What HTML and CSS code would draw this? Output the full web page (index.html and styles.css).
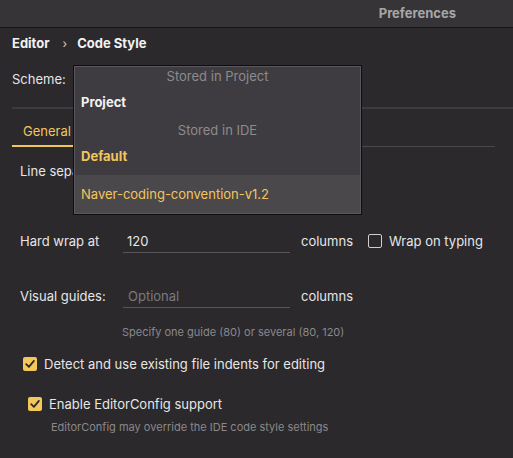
FILE: index.html
```html
<!DOCTYPE html>
<html>
<head>
<meta charset="utf-8">
<link rel="stylesheet" href="styles.css">
</head>
<body>
<div class="window">
  <div class="titlebar"><span class="title">Preferences</span></div>
  <div class="content">
    <div class="crumbs"><span>Editor</span><span class="sep">›</span><span>Code Style</span></div>
    <div class="scheme-row"><span class="label">Scheme:</span></div>
    <div class="divider"></div>
    <div class="tabs"><span class="tab active">General</span></div>
    <div class="line-sep">Line separator:</div>
    <div class="form-row wrap-row">
      <span class="flabel">Hard wrap at</span>
      <span class="field"><span class="value">120</span></span>
      <span class="unit">columns</span>
      <span class="check off"></span>
      <span class="clabel">Wrap on typing</span>
    </div>
    <div class="form-row guides-row">
      <span class="flabel">Visual guides:</span>
      <span class="field"><span class="placeholder">Optional</span></span>
      <span class="unit">columns</span>
    </div>
    <div class="hint guide-hint">Specify one guide (80) or several (80, 120)</div>
    <div class="cb-row detect">
      <span class="check on"><svg viewBox="0 0 14 14" width="14" height="14"><path d="M3.2 7.2 L5.9 9.9 L10.9 3.9" fill="none" stroke="#2b292c" stroke-width="1.8" stroke-linecap="round" stroke-linejoin="round"/></svg></span>
      <span class="clabel">Detect and use existing file indents for editing</span>
    </div>
    <div class="cb-row editorconfig">
      <span class="check on"><svg viewBox="0 0 14 14" width="14" height="14"><path d="M3.2 7.2 L5.9 9.9 L10.9 3.9" fill="none" stroke="#2b292c" stroke-width="1.8" stroke-linecap="round" stroke-linejoin="round"/></svg></span>
      <span class="clabel">Enable EditorConfig support</span>
    </div>
    <div class="hint ec-hint">EditorConfig may override the IDE code style settings</div>
  </div>
  <div class="popup">
    <div class="group g1">Stored in Project</div>
    <div class="item bold project">Project</div>
    <div class="group g2">Stored in IDE</div>
    <div class="item bold yellow default">Default</div>
    <div class="item selected yellow">Naver-coding-convention-v1.2</div>
  </div>
</div>
</body>
</html>
```
FILE: styles.css
```css
* { box-sizing: border-box; }
html, body { margin: 0; padding: 0; }
body {
  background: #2b292c;
  font-family: Inter, "Noto Sans", "Liberation Sans", sans-serif;
  font-size: 13px;
  color: #dcdcdc;
  width: 513px;
  height: 458px;
  overflow: hidden;
}
.window { position: relative; width: 513px; height: 458px; }
.titlebar {
  height: 28px;
  background: #363437;
  border-bottom: 1px solid #161517;
  display: flex;
  align-items: center;
  justify-content: flex-end;
  padding-right: 57px;
  padding-bottom: 2px;
}
.title { color: #a7a6a8; font-weight: 700; font-size: 13px; }
.content { padding-left: 12px; }
.crumbs {
  margin-top: 7px;
  height: 16px;
  display: flex;
  align-items: center;
  color: #f2f2f2;
  font-weight: 700;
  font-size: 13px;
}
.crumbs .sep { font-weight: 400; color: #cfcfcf; font-size: 12px; margin: 0 10px 0 13px; }
.scheme-row { margin-top: 20px; height: 16px; display: flex; align-items: center; }
.label { color: #e6e6e6; }
.divider { margin-top: 20px; height: 2px; background: #3d3b3e; }
.tabs { height: 38px; display: flex; align-items: stretch; width: 483px; border-bottom: 1px solid #4a484b; }
.tab { padding: 0 11px 6px; display: flex; align-items: flex-end; }
.tab.active { color: #f2c55c; border-bottom: 2px solid #f2c55c; margin-bottom: -1px; }
.line-sep { margin-top: 16px; padding-left: 8px; height: 16px; color: #e6e6e6; }
.form-row { display: flex; align-items: center; padding-left: 8px; height: 24px; }
.wrap-row { margin-top: 50px; }
.guides-row { margin-top: 31px; }
.flabel { width: 103px; color: #e6e6e6; }
.field {
  width: 167px;
  height: 24px;
  border-bottom: 1px solid #575559;
  display: flex;
  align-items: center;
  padding-left: 4px;
}
.value { color: #e6e6e6; }
.placeholder { color: #7b797c; padding-left: 1px; }
.unit { margin-left: 11px; color: #e6e6e6; }
.check {
  width: 14px; height: 14px; border-radius: 2px;
  display: inline-flex; align-items: center; justify-content: center;
  flex: none;
}
.check.off { border: 1px solid #cfcfcf; margin-left: 15px; }
.check.on { background: #f3c75a; }
.clabel { margin-left: 7px; color: #e6e6e6; }
.hint { font-size: 11px; color: #8a888b; height: 14px; display: flex; align-items: center; }
.guide-hint { margin-top: 17px; padding-left: 110px; }
.cb-row { display: flex; align-items: center; height: 16px; }
.detect { margin-top: 17px; padding-left: 11px; }
.editorconfig { margin-top: 24px; padding-left: 16px; }
.ec-hint { margin-top: 8px; padding-left: 39px; }
.popup {
  position: absolute;
  left: 73px;
  top: 65px;
  width: 289px;
  height: 150px;
  background: #3e3c40;
  border: 1px solid #0e0e0f;
  box-shadow: inset 0 0 0 1px #5a585c;
  padding: 1px;
  display: flex;
  flex-direction: column;
}
.group { display: flex; align-items: center; justify-content: center; color: #8d8b8e; }
.g1 { height: 17px; }
.g2 { height: 20px; }
.item { display: flex; align-items: center; padding-left: 6px; color: #f2f2f2; }
.item.bold { font-weight: 700; }
.item.yellow { color: #f2c55c; }
.project { height: 36px; }
.default { height: 35px; padding-bottom: 3px; }
.item.selected { background: #4a484b; flex: 1; }
```
